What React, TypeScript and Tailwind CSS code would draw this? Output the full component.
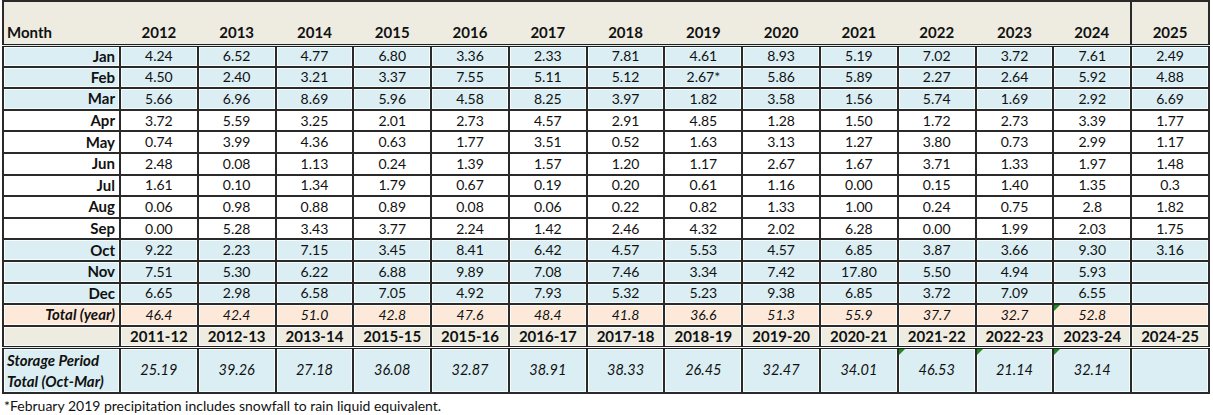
import React from "react";

const years = ["2012","2013","2014","2015","2016","2017","2018","2019","2020","2021","2022","2023","2024","2025"];

type Row = { label: string; values: string[]; bg: string };

const rows: Row[] = [
  { label: "Jan", bg: "bg-[#daeef3]", values: ["4.24","6.52","4.77","6.80","3.36","2.33","7.81","4.61","8.93","5.19","7.02","3.72","7.61","2.49"] },
  { label: "Feb", bg: "bg-[#daeef3]", values: ["4.50","2.40","3.21","3.37","7.55","5.11","5.12","2.67*","5.86","5.89","2.27","2.64","5.92","4.88"] },
  { label: "Mar", bg: "bg-[#daeef3]", values: ["5.66","6.96","8.69","5.96","4.58","8.25","3.97","1.82","3.58","1.56","5.74","1.69","2.92","6.69"] },
  { label: "Apr", bg: "bg-white", values: ["3.72","5.59","3.25","2.01","2.73","4.57","2.91","4.85","1.28","1.50","1.72","2.73","3.39","1.77"] },
  { label: "May", bg: "bg-white", values: ["0.74","3.99","4.36","0.63","1.77","3.51","0.52","1.63","3.13","1.27","3.80","0.73","2.99","1.17"] },
  { label: "Jun", bg: "bg-white", values: ["2.48","0.08","1.13","0.24","1.39","1.57","1.20","1.17","2.67","1.67","3.71","1.33","1.97","1.48"] },
  { label: "Jul", bg: "bg-white", values: ["1.61","0.10","1.34","1.79","0.67","0.19","0.20","0.61","1.16","0.00","0.15","1.40","1.35","0.3"] },
  { label: "Aug", bg: "bg-white", values: ["0.06","0.98","0.88","0.89","0.08","0.06","0.22","0.82","1.33","1.00","0.24","0.75","2.8","1.82"] },
  { label: "Sep", bg: "bg-white", values: ["0.00","5.28","3.43","3.77","2.24","1.42","2.46","4.32","2.02","6.28","0.00","1.99","2.03","1.75"] },
  { label: "Oct", bg: "bg-[#daeef3]", values: ["9.22","2.23","7.15","3.45","8.41","6.42","4.57","5.53","4.57","6.85","3.87","3.66","9.30","3.16"] },
  { label: "Nov", bg: "bg-[#daeef3]", values: ["7.51","5.30","6.22","6.88","9.89","7.08","7.46","3.34","7.42","17.80","5.50","4.94","5.93",""] },
  { label: "Dec", bg: "bg-[#daeef3]", values: ["6.65","2.98","6.58","7.05","4.92","7.93","5.32","5.23","9.38","6.85","3.72","7.09","6.55",""] },
];

const totals = ["46.4","42.4","51.0","42.8","47.6","48.4","41.8","36.6","51.3","55.9","37.7","32.7","52.8",""];
const periods = ["2011-12","2012-13","2013-14","2015-15","2015-16","2016-17","2017-18","2018-19","2019-20","2020-21","2021-22","2022-23","2023-24","2024-25"];
const storage = ["25.19","39.26","27.18","36.08","32.87","38.91","38.33","26.45","32.47","34.01","46.53","21.14","32.14",""];

const cell = "border-2 border-[#2a2a2a] shadow-[inset_0_0_0_1px_rgba(255,255,255,0.75)] p-0 text-center align-middle";
const dbl = " border-b-[3px] border-b-[#1e1e1e] [border-bottom-style:double]";

function Flag() {
  return <span className="absolute left-0 top-0 h-0 w-0 border-t-[6px] border-r-[6px] border-t-[#1f8a1f] border-r-transparent" />;
}

export default function App() {
  return (
    <div className="w-[1213px] h-[415px] bg-white text-[#111] font-['Lato','Carlito','Liberation_Sans',sans-serif] text-[14px] leading-none">
      <table className="ml-[2px] w-[1208px] table-fixed border-collapse">
        <colgroup>
          <col className="w-[117px]" />
          {years.map((y) => (
            <col key={y} />
          ))}
        </colgroup>
        <thead>
          <tr className={"h-[44px] bg-[#eeece1] border-2 border-[#2a2a2a]" + dbl}>
            <th className="p-0 pl-[3px] pb-[4px] text-left align-bottom font-bold text-[15px]">Month</th>
            {years.map((y, i) => (
              <th
                key={y}
                className={
                  "p-0 pb-[4px] text-center align-bottom font-bold text-[15px] " +
                  (i === 13 ? "border-l-2 border-l-[#2a2a2a]" : "")
                }
              >
                {y}
              </th>
            ))}
          </tr>
        </thead>
        <tbody>
          {rows.map((r) => (
            <tr key={r.label} className={"h-[21.6px] " + r.bg}>
              <td className={cell + " !text-right pr-[4px] font-bold text-[15px]"}>{r.label}</td>
              {r.values.map((v, i) => (
                <td key={i} className={cell}>
                  {v}
                </td>
              ))}
            </tr>
          ))}
          <tr className="h-[21.6px] bg-[#fde9d9]">
            <td className={cell + " !text-right pr-[4px] font-bold italic text-[15px]"}>Total (year)</td>
            {totals.map((v, i) => (
              <td key={i} className={cell + " italic relative"}>
                {i === 12 && <Flag />}
                {v}
              </td>
            ))}
          </tr>
          <tr className={"h-[21.6px] bg-[#eeece1]" + dbl}>
            <td className={cell + dbl}></td>
            {periods.map((v, i) => (
              <td key={i} className={cell + " font-bold text-[15px]" + dbl}>
                {v}
              </td>
            ))}
          </tr>
          <tr className="h-[46px] bg-[#daeef3]">
            <td className={cell + " !text-left pl-[3px] font-bold italic text-[15px] leading-[21px]"}>
              Storage Period
              <br />
              Total (Oct-Mar)
            </td>
            {storage.map((v, i) => (
              <td key={i} className={cell + " italic relative text-[14.5px]"}>
                {(i === 10 || i === 11 || i === 12) && <Flag />}
                {v}
              </td>
            ))}
          </tr>
        </tbody>
      </table>
      <p className="mt-[3px] pl-[4px] text-[14px] leading-[18px]">
        *February 2019 precipitation includes snowfall to rain liquid equivalent.
      </p>
    </div>
  );
}
